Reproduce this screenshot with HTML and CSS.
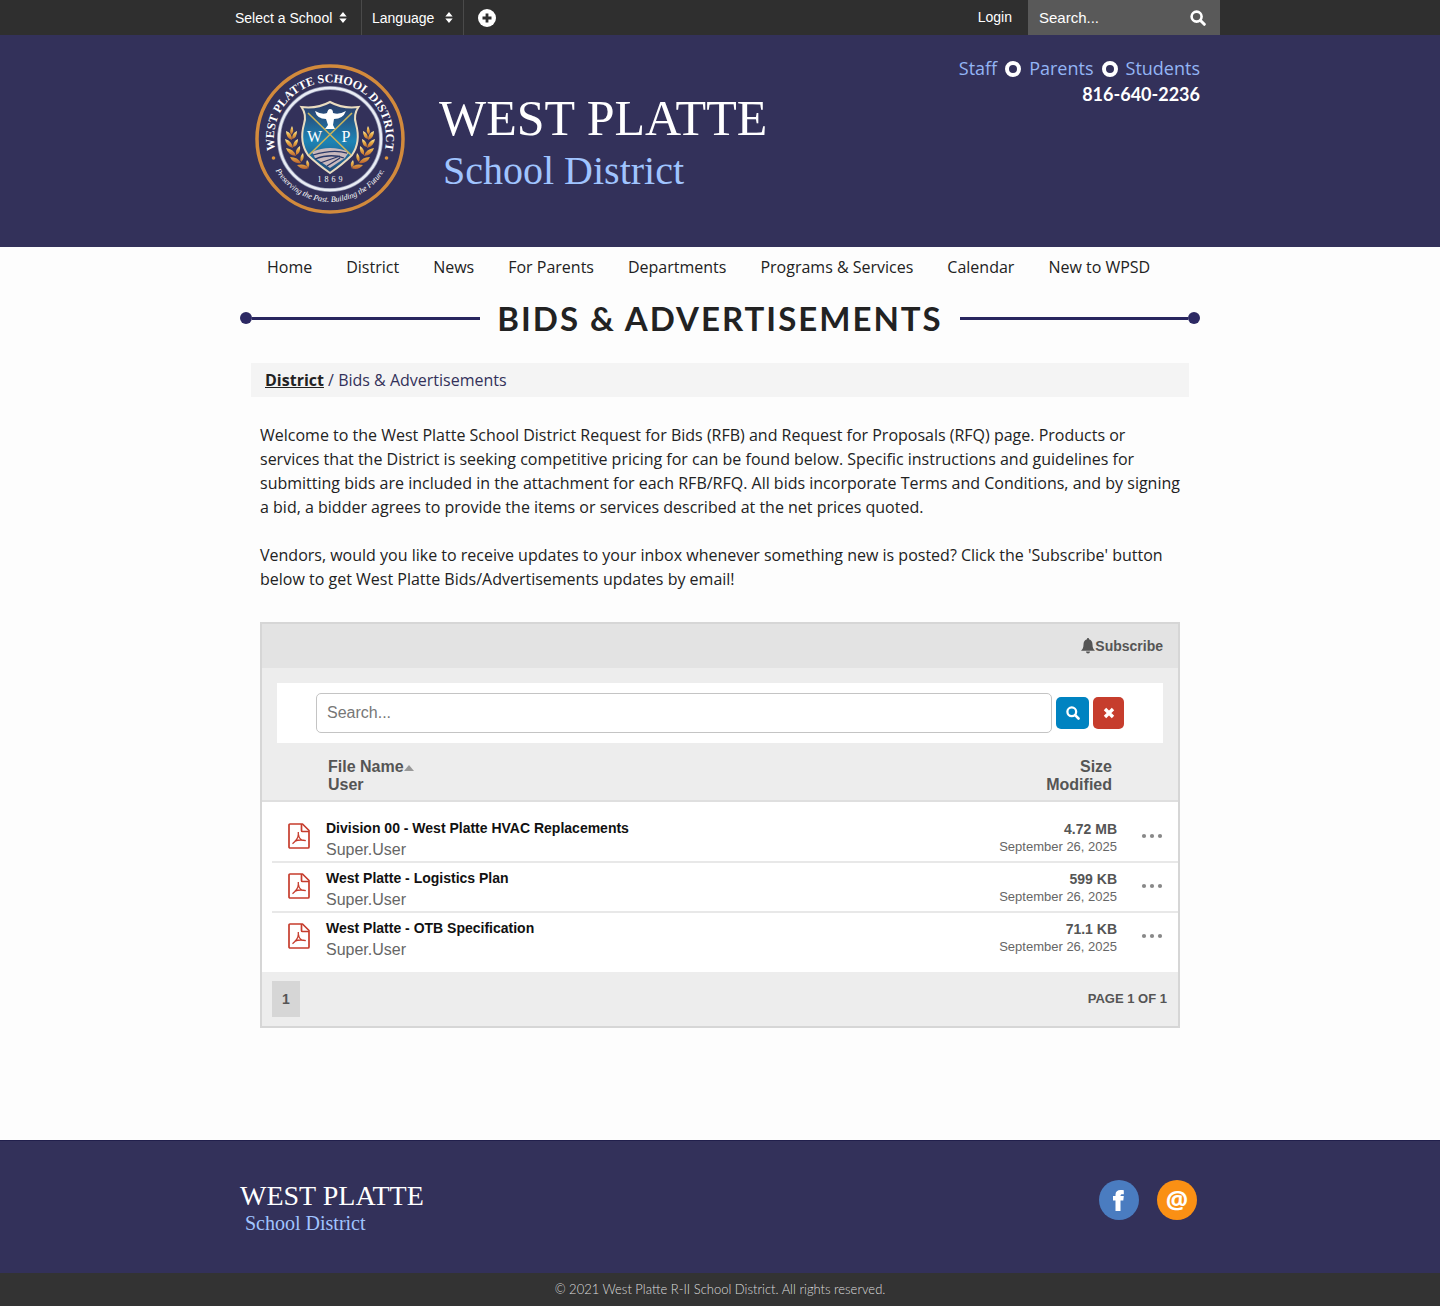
FILE: index.html
```html
<!DOCTYPE html>
<html lang="en">
<head>
<meta charset="utf-8">
<meta name="viewport" content="width=device-width, initial-scale=1">
<title>Bids &amp; Advertisements - West Platte School District</title>
<link rel="stylesheet" href="styles.css">
</head>
<body>
<svg class="sprite" aria-hidden="true">
  <symbol id="sort" viewBox="0 0 8 12"><path d="M4 0l4 5H0zM4 12l4-5H0z"/></symbol>
  <symbol id="glass" viewBox="0 0 16 16"><circle cx="6.600" cy="6.600" r="5" fill="none" stroke="currentColor" stroke-width="2.600"/><path d="M10.500 10.500l3.800 3.800" stroke="currentColor" stroke-width="3" stroke-linecap="round"/></symbol>
  <symbol id="pdf" viewBox="0 0 22 26"><g fill="none" stroke="currentColor" stroke-width="1.700" stroke-linejoin="round"><path d="M2 1h12.500L21 7.500V24a1 1 0 0 1-1 1H2a1 1 0 0 1-1-1V2a1 1 0 0 1 1-1z"/><path d="M13.500 1v6.500a1 1 0 0 0 1 1H21"/><path stroke-width="1.300" d="M10.300 9v2.500c0 2-2 6-5.800 9.300M10.500 11.500c.3 3 2.500 5.300 4.300 6M6.500 18.300c3-1.300 7-1.800 11.300-.6"/></g></symbol>
  <symbol id="dots" viewBox="0 0 22 6"><circle cx="3" cy="3" r="2.100"/><circle cx="11" cy="3" r="2.100"/><circle cx="19" cy="3" r="2.100"/></symbol>
</svg>

<div class="topbar">
  <div class="topbar-inner">
    <div class="picker">
      <select aria-label="Select a School"><option>Select a School</option></select>
      <svg class="sort"><use href="#sort"/></svg>
    </div>
    <div class="picker picker-language">
      <select aria-label="Language"><option>Language</option></select>
      <svg class="sort"><use href="#sort"/></svg>
    </div>
    <button class="plus" type="button" aria-label="More">
      <svg viewBox="0 0 18 18"><circle cx="9" cy="9" r="9" fill="#fff"/><path d="M9 4.500v9M4.500 9h9" stroke="#2f2f2f" stroke-width="2.800"/></svg>
    </button>
    <a class="login" href="#">Login</a>
    <form class="site-search">
      <input type="text" placeholder="Search..." aria-label="Search site">
      <button type="button" aria-label="Search"><svg class="glass"><use href="#glass"/></svg></button>
    </form>
  </div>
</div>

<header class="header">
  <div class="header-inner">
    <svg class="seal" viewBox="0 0 150 150" role="img" aria-label="West Platte School District seal">
      <defs>
        <path id="arc-top" d="M20.700 88A56 56 0 1 1 129.300 88"/>
        <path id="arc-bottom" d="M15.800 96.500A63 63 0 0 0 134.200 96.500"/>
        <linearGradient id="sky" x1="0" y1="0" x2="0" y2="1"><stop offset="0" stop-color="#2c3764"/><stop offset=".55" stop-color="#1d84b5"/><stop offset="1" stop-color="#234a78"/></linearGradient>
        <linearGradient id="wheat" x1="0" y1="0" x2="0" y2="1"><stop offset="0" stop-color="#fff0b0"/><stop offset=".4" stop-color="#e8ad45"/><stop offset="1" stop-color="#b9602f"/></linearGradient>
        <g id="ear" fill="url(#wheat)">
          <path d="M37 62q3 5-1 9q-2-4 1-9z"/>
          <path d="M31 67q6 2 6 9q-6-2-6-9zM42 67q-5 2-5 8q5-1 5-8z"/>
          <path d="M30 75q7 2 8 9q-7-2-8-9zM43 75q-5 2-5 8q5-1 5-8z"/>
          <path d="M31 84q8 1 10 8q-8-1-10-8zM45 82q-5 3-4 9q5-2 4-9z"/>
          <path d="M35 93q8 0 11 6q-8 1-11-6zM48 89q-4 4-2 9q4-3 2-9z"/>
          <path d="M42 101q8-2 12 3q-7 3-12-3zM52 96q-2 4 1 8q3-4-1-8z"/>
        </g>
      </defs>
      <circle cx="75" cy="75" r="73" fill="none" stroke="#d28a3c" stroke-width="3.500"/>
      <circle cx="75" cy="75" r="51" fill="none" stroke="#8d92ae" stroke-width="4"/>
      <circle cx="75" cy="75" r="51" fill="none" stroke="#e9ecf4" stroke-width="2.400"/>
      <text class="seal-name"><textPath href="#arc-top" startOffset="50%">WEST PLATTE SCHOOL DISTRICT</textPath></text>
      <text class="seal-motto"><textPath href="#arc-bottom" startOffset="50%">Preserving the Past. Building the Future.</textPath></text>
      <circle cx="18.500" cy="94" r="1.800" fill="#e0963c"/><circle cx="131.500" cy="94" r="1.800" fill="#e0963c"/>
      <use href="#ear"/><use href="#ear" transform="matrix(-1 0 0 1 150 0)"/>
      <path d="M46.500 43Q62 45 75 38Q88 45 103.500 43Q98 51 101 60Q106 78 97 91Q88 100 75 109Q62 100 53 91Q44 78 49 60Q52 51 46.500 43z" fill="url(#sky)" stroke="#e9dcc0" stroke-width="2"/>
      <path d="M57 88Q75 80 94 88L90 94L75 104L60 94z" fill="#c9b9bd"/>
      <path d="M58 91q20-6 34-2M60 95q16-6 29-1M65 99l20-7M72 102l13-8" stroke="#2b3867" stroke-width="1.300" fill="none"/>
      <path d="M53 49L96 91M97 49L54 91" stroke="#c9b35c" stroke-width="1.600"/>
      <path d="M60 47Q67 51 72 49Q73 45 75 45Q78 45 78 49Q84 51 91 47Q88 55 79 55L78 61L80 65H70L73 61L71 55Q62 55 60 47z" fill="#fff"/>
      <text class="seal-letter" x="59.500" y="78">W</text><text class="seal-letter" x="91" y="78">P</text>
      <text class="seal-year" x="76.500" y="118">1869</text>
    </svg>
    <a class="wordmark" href="#"><span class="wordmark-name">WEST PLATTE</span><span class="wordmark-sub">School District</span></a>
    <div class="contact">
      <nav class="audience" aria-label="Audience">
        <a href="#">Staff</a><span class="ring"></span><a href="#">Parents</a><span class="ring"></span><a href="#">Students</a>
      </nav>
      <a class="phone" href="tel:8166402236">816-640-2236</a>
    </div>
  </div>
</header>

<nav class="nav" aria-label="Main">
  <a href="#">Home</a><a href="#">District</a><a href="#">News</a><a href="#">For Parents</a><a href="#">Departments</a><a href="#">Programs &amp; Services</a><a href="#">Calendar</a><a href="#">New to WPSD</a>
</nav>

<main class="main">
  <div class="title">
    <span class="rule"></span>
    <h1>BIDS &amp; ADVERTISEMENTS</h1>
    <span class="rule rule-end"></span>
  </div>
  <div class="crumbs"><a href="#">District</a> / <span>Bids &amp; Advertisements</span></div>

  <div class="content">
    <p>Welcome to the West Platte School District Request for Bids (RFB) and Request for Proposals (RFQ) page. Products or services that the District is seeking competitive pricing for can be found below. Specific instructions and guidelines for submitting bids are included in the attachment for each RFB/RFQ. All bids incorporate Terms and Conditions, and by signing a bid, a bidder agrees to provide the items or services described at the net prices quoted.</p>
    <p>Vendors, would you like to receive updates to your inbox whenever something new is posted? Click the 'Subscribe' button below to get West Platte Bids/Advertisements updates by email!</p>

    <section class="files" aria-label="Files">
      <div class="files-top">
        <button class="subscribe" type="button"><svg viewBox="0 0 14 16"><path d="M7 0a1 1 0 0 1 1 1.200C10.500 1.800 11.500 4 11.500 6.500c0 3 .8 4.700 2.500 6.200H0C1.700 11.200 2.500 9.500 2.500 6.500 2.500 4 3.500 1.800 6 1.200A1 1 0 0 1 7 0zM5 13.500h4a2 2 0 0 1-4 0z"/></svg>Subscribe</button>
      </div>
      <form class="file-search">
        <input type="text" placeholder="Search..." aria-label="Search files">
        <button class="go" type="button" aria-label="Search"><svg class="glass"><use href="#glass"/></svg></button>
        <button class="clear" type="button" aria-label="Clear"><svg viewBox="0 0 12 12"><path d="M2 2l8 8M10 2l-8 8" stroke="#fff" stroke-width="3.400"/></svg></button>
      </form>
      <table>
        <thead>
          <tr><th class="col-icon"></th><th class="col-name">File Name<svg class="asc" viewBox="0 0 10 6"><path d="M5 0l5 6H0z"/></svg><br>User</th><th class="col-size">Size<br>Modified</th><th class="col-menu"></th></tr>
        </thead>
        <tbody>
          <tr><td class="col-icon"><svg class="pdf"><use href="#pdf"/></svg></td><td class="col-name"><a href="#">Division 00 - West Platte HVAC Replacements</a><span class="user">Super.User</span></td><td class="col-size"><b>4.72 MB</b><span class="date">September 26, 2025</span></td><td class="col-menu"><button type="button" aria-label="File menu"><svg><use href="#dots"/></svg></button></td></tr>
          <tr><td class="col-icon"><svg class="pdf"><use href="#pdf"/></svg></td><td class="col-name"><a href="#">West Platte - Logistics Plan</a><span class="user">Super.User</span></td><td class="col-size"><b>599 KB</b><span class="date">September 26, 2025</span></td><td class="col-menu"><button type="button" aria-label="File menu"><svg><use href="#dots"/></svg></button></td></tr>
          <tr><td class="col-icon"><svg class="pdf"><use href="#pdf"/></svg></td><td class="col-name"><a href="#">West Platte - OTB Specification</a><span class="user">Super.User</span></td><td class="col-size"><b>71.1 KB</b><span class="date">September 26, 2025</span></td><td class="col-menu"><button type="button" aria-label="File menu"><svg><use href="#dots"/></svg></button></td></tr>
        </tbody>
      </table>
      <div class="files-foot"><button class="page-no" type="button">1</button><span>PAGE 1 OF 1</span></div>
    </section>
  </div>
</main>

<footer class="footer">
  <div class="footer-inner">
    <a class="wordmark wordmark-small" href="#"><span class="wordmark-name">WEST PLATTE</span><span class="wordmark-sub">School District</span></a>
    <div class="social">
      <a class="facebook" href="#" aria-label="Facebook"><svg viewBox="0 0 40 40"><path fill="#fff" d="M16.500 31V20.500H14V16h2.500v-1.500C16.500 11.500 18.500 10 21.500 10c1.300 0 2.400.1 3.300.3v4c-2.600-.3-3.300.1-3.300 1.700h3.300l-.5 4.500h-2.800V31z"/></svg></a>
      <a class="email" href="#" aria-label="Email">@</a>
    </div>
  </div>
</footer>
<div class="copyright">© 2021 West Platte R-II School District. All rights reserved.</div>
</body>
</html>
```
FILE: styles.css
```css
* { box-sizing: border-box; }
body { margin: 0; background: #fdfdfd; color: #222; font: 16px/24px "Open Sans", sans-serif; }
a { color: inherit; text-decoration: none; }
button, input, select { font-family: "Liberation Sans", sans-serif; margin: 0; padding: 0; border: 0; background: none; color: inherit; }
svg { display: block; fill: currentColor; }
.sprite { position: absolute; width: 0; height: 0; }
.glass { width: 16px; height: 16px; }

.topbar { background: #2f2f2f; color: #fff; font: 14px/35px "Liberation Sans", sans-serif; }
.topbar-inner { display: flex; max-width: 1000px; height: 35px; margin: 0 auto; }
.picker { position: relative; width: 142px; border-right: 1px solid #4a4a4a; }
.picker select { appearance: none; width: 100%; height: 35px; padding-left: 15px; font-size: 14px; color: #fff; }
.picker-language { width: 102px; }
.picker-language select { padding-left: 10px; }
.sort { position: absolute; right: 14px; top: 12px; width: 8px; height: 11px; pointer-events: none; }
.picker-language .sort { right: 10px; }
.plus { width: 46px; }
.plus svg { width: 18px; height: 18px; margin: 0 auto; }
.login { margin-left: auto; padding: 0 16px; }
.site-search { display: flex; align-items: center; width: 192px; padding: 0 14px 0 11px; background: #595959; }
.site-search input { flex: 1; min-width: 0; height: 35px; font-size: 15px; outline: 0; }
.site-search input::placeholder { color: #fff; opacity: 1; }

.header { background: #33315a; color: #fff; }
.header-inner { display: flex; align-items: flex-start; max-width: 960px; margin: 0 auto; padding: 20px 0 33px 15px; }
.seal { width: 150px; height: 150px; margin: 9px 34px 0 0; }
.seal text { fill: #fff; font-family: "Liberation Serif", serif; text-anchor: middle; }
.seal .seal-name { font-size: 12px; font-weight: bold; }
.seal .seal-motto { font-size: 8px; font-style: italic; }
.seal .seal-letter { font-size: 16px; }
.seal .seal-year { font-size: 8px; letter-spacing: 3px; }
.wordmark { display: flex; flex-direction: column; font-family: "Liberation Serif", serif; }
.header .wordmark { margin-top: 36px; }
.wordmark-name { font-size: 50px; line-height: 54px; color: #fff; }
.wordmark-sub { padding-left: 4px; font-size: 40px; line-height: 52px; color: #a0c4ff; }
.contact { margin-left: auto; text-align: right; }
.audience { display: flex; align-items: center; gap: 8px; font-size: 18px; line-height: 26px; color: #93b5f5; }
.ring { width: 16px; height: 16px; margin-top: 2px; border: 4px solid #fff; border-radius: 50%; }
.phone { font: bold 18px/26px Lato, sans-serif; }

.nav { display: flex; max-width: 940px; margin: 0 auto; line-height: 40px; }
.nav a { padding: 0 17px; }

.main { max-width: 960px; margin: 0 auto; }
.title { display: grid; grid-template-columns: 1fr 2fr 1fr; align-items: center; padding: 9px 0 23px; }
.title h1 { margin: 0; font: bold 33px/44px Lato, sans-serif; letter-spacing: 2px; text-align: center; white-space: nowrap; }
.rule { display: flex; align-items: center; color: #33315a; }
.rule::before { content: ""; width: 12px; height: 12px; border-radius: 50%; background: #2c2963; }
.rule::after { content: ""; flex: 1; height: 3px; background: #29265f; }
.rule-end { flex-direction: row-reverse; }
.crumbs { margin: 0 11px; padding: 5px 14px; background: #f4f4f4; color: #33315a; }
.crumbs a { color: #222; font-weight: bold; text-decoration: underline; }
.content { padding: 26px 20px 112px; }
.content p { margin: 0 0 24px; }

.files { margin-top: 31px; border: 2px solid #d6d6d6; background: #ededed; color: #555; font-family: "Liberation Sans", sans-serif; }
.files-top { display: flex; justify-content: flex-end; height: 44px; padding: 0 15px; background: #e3e3e3; }
.subscribe { display: flex; align-items: center; font-size: 14px; font-weight: bold; }
.subscribe svg { width: 14px; height: 16px; }
.file-search { display: flex; align-items: center; gap: 4px; margin: 15px 15px 6px; padding: 10px 39px; background: #fff; }
.file-search input { flex: 1; min-width: 0; height: 40px; padding: 0 10px; border: 1px solid #c4c4c4; border-radius: 5px; font-size: 16px; }
.file-search input::placeholder { color: #777; }
.file-search button { display: flex; align-items: center; justify-content: center; width: 33px; height: 32px; border-radius: 5px; color: #fff; background: #0083c1; }
.file-search .go svg { width: 14px; height: 14px; }
.file-search .clear { width: 31px; background: #c63d2d; }
.clear svg { width: 12px; height: 12px; }

table { width: 100%; table-layout: fixed; border-spacing: 0; background: #fff; }
th { padding: 9px 0 6px; background: #ededed; border-bottom: 2px solid #dfdfdf; font-size: 16px; line-height: 18px; text-align: left; vertical-align: top; }
td { height: 50px; padding: 0; vertical-align: top; border-bottom: 2px solid #e8e8e8; }
tbody::before { content: ""; display: table-row; height: 11px; }
tbody tr:last-child td { height: 59px; border-bottom: 0; }
td.col-icon { border-bottom: 0; background: linear-gradient(#e8e8e8, #e8e8e8) 10px 100% / 100% 2px no-repeat; }
tbody tr:last-child .col-icon { background: none; }
.col-icon { width: 64px; }
th.col-name { padding-left: 2px; }
.col-size { width: 180px; text-align: right; }
th.col-size { padding-right: 5px; text-align: right; }
.col-menu { width: 61px; }
.asc { display: inline-block; width: 10px; height: 6px; margin-bottom: 1px; color: #999; }
.pdf { width: 22px; height: 26px; margin: 10px 0 0 26px; color: #c63d2d; }
td a, td span, td b { display: block; }
td a { padding-top: 5px; color: #111; font-size: 14px; line-height: 20px; font-weight: bold; }
.user { font-size: 16px; line-height: 23px; color: #666; }
td b { padding-top: 6px; font-size: 14px; line-height: 20px; }
.date { font-size: 13px; line-height: 16px; color: #666; }
.col-menu button { display: block; margin: 20px 0 0 24px; color: #888; }
.col-menu svg { width: 22px; height: 6px; }
.files-foot { display: flex; align-items: center; justify-content: space-between; padding: 9px 11px 9px 10px; font-size: 13px; font-weight: bold; }
.page-no { width: 28px; height: 36px; background: #d6d6d6; font-size: 14px; font-weight: bold; }

.footer { background: #33315a; border-top: 1px solid #211f4c; }
.footer-inner { display: flex; justify-content: space-between; align-items: flex-start; max-width: 960px; margin: 0 auto; padding: 39px 3px 38px 0; }
.wordmark-small .wordmark-name { font-size: 28px; line-height: 32px; }
.wordmark-small .wordmark-sub { padding-left: 5px; font-size: 20px; line-height: 23px; }
.social { display: flex; gap: 18px; }
.social a { width: 40px; height: 40px; border-radius: 50%; }
.facebook { background: #4a7cc0; }
.email { background: #fa9014; color: #fff; font: bold 25px/38px "Open Sans", sans-serif; text-align: center; }
.copyright { background: #333; color: #ddd; font: 300 13px/33px Lato, sans-serif; text-align: center; }
```
